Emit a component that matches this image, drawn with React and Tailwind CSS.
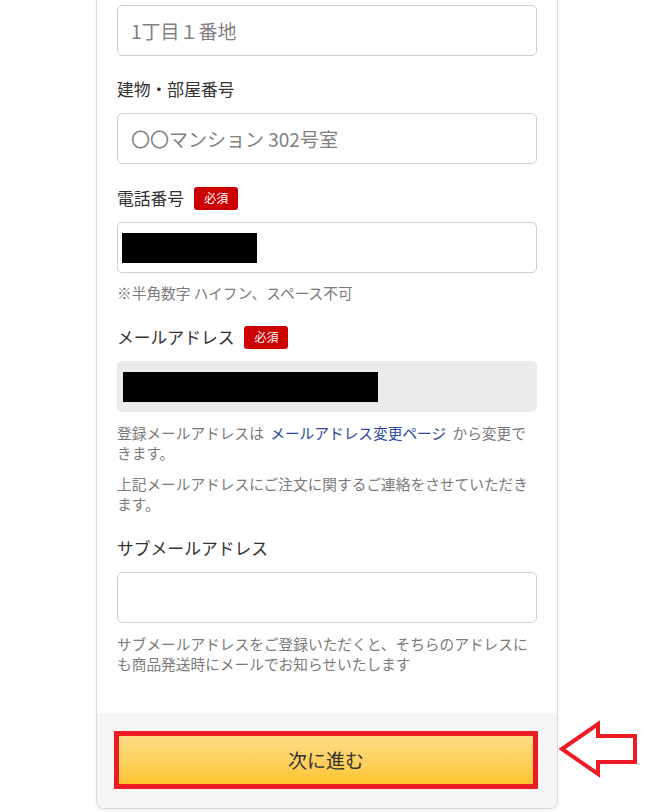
import { useState } from 'react'

const font = { fontFamily: '"Noto Sans CJK JP", "Noto Sans", sans-serif' }

const Badge = () => (
	<span className="ml-[10px] inline-flex h-[23px] w-[44px] items-center justify-center rounded-[3px] bg-[#cc0000] text-[12px] leading-none text-white">
		必須
	</span>
)

const Label = ({ children, required }) => (
	<div className="mb-[12px] flex h-[24px] items-center text-[16.8px] leading-[24px] text-[#333]">
		{children}
		{required && <Badge />}
	</div>
)

const inputClass =
	'block h-[51px] w-full rounded-[5px] border border-[#cfcfcf] bg-white px-[13px] text-[19px] text-[#333] outline-none placeholder:text-[#808080]'

const Hint = ({ children, className = '' }) => (
	<p className={`text-[14.7px] leading-[20px] text-[#7a7a7a] ${className}`}>{children}</p>
)

const App = () => {
	const [street, setStreet] = useState('')
	const [building, setBuilding] = useState('')
	const [subMail, setSubMail] = useState('')

	return (
		<div className="min-h-[812px] bg-white" style={font}>
			<div className="relative ml-[96px] w-[462px]">
				<div className="overflow-hidden rounded-b-[8px] border-x border-b border-[#dcdcdc] bg-white shadow-[0_1px_4px_rgba(0,0,0,0.08)]">
					<div className="px-[20px] pt-[5px] pb-[39px]">
						<div className="mb-[21px]">
							<input
								value={street}
								onChange={(e) => setStreet(e.target.value)}
								placeholder="1丁目１番地"
								className={inputClass}
							/>
						</div>

						<div className="mb-[22px]">
							<Label>建物・部屋番号</Label>
							<input
								value={building}
								onChange={(e) => setBuilding(e.target.value)}
								placeholder="〇〇マンション 302号室"
								className={inputClass}
							/>
						</div>

						<div className="mb-[22px]">
							<Label required>電話番号</Label>
							<div className="flex h-[51px] w-full items-center rounded-[5px] border border-[#cfcfcf] bg-white pl-[4px]">
								<span className="block h-[30px] w-[135px] bg-black" />
							</div>
							<Hint className="mt-[10px]">※半角数字 ハイフン、スペース不可</Hint>
						</div>

						<div className="mb-[22px]">
							<Label required>メールアドレス</Label>
							<div className="flex h-[51px] w-full items-center rounded-[5px] bg-[#ebebeb] pl-[6px]">
								<span className="block h-[30px] w-[255px] bg-black" />
							</div>
							<Hint className="mt-[11px]">
								登録メールアドレスは{' '}
								<a href="#" className="mx-[3px] text-[#2b4a9a]">
									メールアドレス変更ページ
								</a>{' '}
								から変更できます。
							</Hint>
							<Hint className="mt-[11px]">
								上記メールアドレスにご注文に関するご連絡をさせていただきます。
							</Hint>
						</div>

						<div>
							<Label>サブメールアドレス</Label>
							<input
								value={subMail}
								onChange={(e) => setSubMail(e.target.value)}
								className={inputClass}
							/>
							<Hint className="mt-[11px]">
								サブメールアドレスをご登録いただくと、そちらのアドレスにも商品発送時にメールでお知らせいたします
							</Hint>
						</div>
					</div>

					<div className="bg-[#f6f6f6] px-[17px] pt-[18px] pb-[19px]">
						<button className="flex h-[58px] w-[424px] items-center justify-center border-[5px] border-[#ed1c24] bg-gradient-to-b from-[#fddd85] to-[#fec42a] text-[19px] text-[#333]">
							次に進む
						</button>
					</div>
				</div>

				{/* annotation arrow */}
				<svg
					className="absolute left-[462px] top-[720px]"
					width="84"
					height="60"
					viewBox="0 0 84 60"
				>
					<polygon
						points="4,29 40,4 40,16 77,16 77,42 40,42 40,54"
						fill="white"
						stroke="#ed1c24"
						strokeWidth="4"
						strokeLinejoin="miter"
					/>
				</svg>
			</div>
		</div>
	)
}

export default App
